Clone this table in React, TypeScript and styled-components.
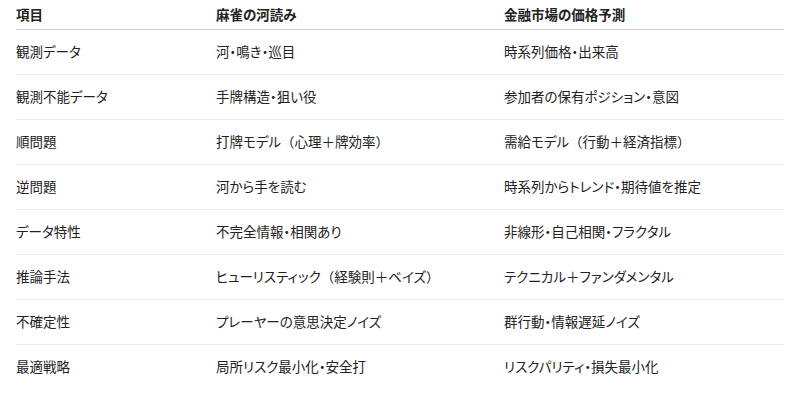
import styled, { createGlobalStyle } from "styled-components"

const GlobalStyle = createGlobalStyle`
    body {
        margin: 0;
        background: #fff;
        font-family: "Noto Sans CJK JP", "Noto Sans", sans-serif;
        color: #222;
    }
`
const Table = styled.table`
    width: 768px;
    margin: 0 0 0 16px;
    border-collapse: collapse;
    font-size: 13.5px;
    font-feature-settings: "palt";
    text-align: left;
`
const Head = styled.th<{w:number}>`
    width: ${({w})=>w}px;
    height: 27px;
    padding: 0 0 2px 0;
    font-weight: bold;
    vertical-align: middle;
    border-bottom: 1px solid #d2d2d2;
`
const Row = styled.tr`
    border-bottom: 1px solid #ececec;
    &:last-child {
        border-bottom: none;
    }
`
const Cell = styled.td`
    height: 41px;
    padding: 0 0 3px 0;
    vertical-align: middle;
`
// full-width brackets keep their em box like the original
const Wide = styled.span`
    font-feature-settings: normal;
`

const rows = [
    ["観測データ", "河・鳴き・巡目", "時系列価格・出来高"],
    ["観測不能データ", "手牌構造・狙い役", "参加者の保有ポジション・意図"],
    ["順問題", "打牌モデル（心理＋牌効率）", "需給モデル（行動＋経済指標）"],
    ["逆問題", "河から手を読む", "時系列からトレンド・期待値を推定"],
    ["データ特性", "不完全情報・相関あり", "非線形・自己相関・フラクタル"],
    ["推論手法", "ヒューリスティック（経験則＋ベイズ）", "テクニカル＋ファンダメンタル"],
    ["不確定性", "プレーヤーの意思決定ノイズ", "群行動・情報遅延ノイズ"],
    ["最適戦略", "局所リスク最小化・安全打", "リスクパリティ・損失最小化"],
]

const renderText = (s: string) =>
    s.split(/([（）])/).map((part, k) =>
        part === "（" || part === "）" ? <Wide key={k}>{part}</Wide> : part
    )

const App = () => {
    return (
        <>
            <GlobalStyle />
            <Table>
                <thead>
                    <tr>
                        <Head w={200}>項目</Head>
                        <Head w={288}>麻雀の河読み</Head>
                        <Head w={280}>金融市場の価格予測</Head>
                    </tr>
                </thead>
                <tbody>
                    {rows.map((r, i) => (
                        <Row key={i}>
                            {r.map((c, j) => <Cell key={j}>{renderText(c)}</Cell>)}
                        </Row>
                    ))}
                </tbody>
            </Table>
        </>
    )
}

export default App
